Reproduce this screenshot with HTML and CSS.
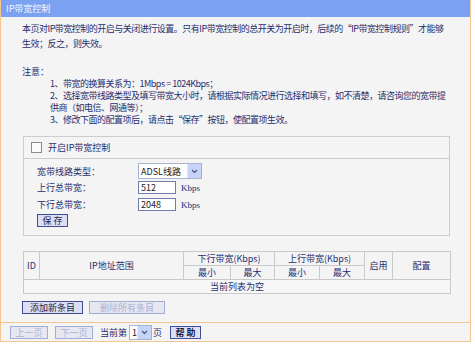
FILE: index.html
```html
<!DOCTYPE html>
<html lang="zh-CN">
<head>
    <meta charset="UTF-8">
    <title>IP带宽控制</title>
    <link rel="stylesheet" href="styles.css">
</head>
<body>
    <div class="frame">
        <div class="title">IP带宽控制</div>
        <div class="main">
            <p class="intro">本页对IP带宽控制的开启与关闭进行设置。只有IP带宽控制的总开关为开启时，后续的“IP带宽控制规则”才能够<br>生效；反之，则失效。</p>
            <p class="note-title">注意：</p>
            <ul class="notes">
                <li>1、带宽的换算关系为：1Mbps = 1024Kbps；</li>
                <li>2、选择宽带线路类型及填写带宽大小时，请根据实际情况进行选择和填写，如不清楚，请咨询您的宽带提<br>供商（如电信、网通等）；</li>
                <li>3、修改下面的配置项后，请点击“保存”按钮，使配置项生效。</li>
            </ul>

            <div class="box">
                <div class="box-head"><span class="check"></span>开启IP带宽控制</div>
                <div class="form">
                    <div class="row">
                        <span class="label">宽带线路类型：</span>
                        <div class="select wide">ADSL线路<span class="arrow"><svg width="7" height="5" viewBox="0 0 7 5"><path d="M1 1l2.5 2.5L6 1" fill="none" stroke="#4d6185" stroke-width="1.4"/></svg></span></div>
                    </div>
                    <div class="row">
                        <span class="label">上行总带宽：</span>
                        <span class="input">512</span>
                        <span class="unit">Kbps</span>
                    </div>
                    <div class="row">
                        <span class="label">下行总带宽：</span>
                        <span class="input">2048</span>
                        <span class="unit">Kbps</span>
                    </div>
                    <button class="btn save">保 存</button>
                </div>
            </div>

            <table class="list">
                <colgroup>
                    <col style="width:16px"><col style="width:144px"><col style="width:47px"><col style="width:44px">
                    <col style="width:45px"><col style="width:45px"><col style="width:28px"><col style="width:58px">
                </colgroup>
                <tr>
                    <th rowspan="2">ID</th>
                    <th rowspan="2">IP地址范围</th>
                    <th colspan="2">下行带宽(Kbps)</th>
                    <th colspan="2">上行带宽(Kbps)</th>
                    <th rowspan="2">启用</th>
                    <th rowspan="2">配置</th>
                </tr>
                <tr>
                    <th>最小</th><th>最大</th><th>最小</th><th>最大</th>
                </tr>
                <tr>
                    <td colspan="8" class="empty">当前列表为空</td>
                </tr>
            </table>

            <div class="actions">
                <button class="btn">添加新条目</button>
                <button class="btn off">删除所有条目</button>
            </div>
        </div>
        <div class="nav">
            <button class="btn off page">上一页</button>
            <button class="btn off page">下一页</button>
            <span class="cur">当前第</span>
            <div class="select small">1<span class="arrow"><svg width="7" height="5" viewBox="0 0 7 5"><path d="M1 1l2.5 2.5L6 1" fill="none" stroke="#4d6185" stroke-width="1.4"/></svg></span></div>
            <span>页</span>
            <button class="btn help">帮 助</button>
        </div>
    </div>
</body>
</html>
```

FILE: styles.css
```css
body {
    margin: 0;
    background: #ffffff;
    font-family: "Noto Sans CJK SC", "DejaVu Sans", sans-serif;
    font-size: 9px;
    color: #1f2e6e;
}
.frame {
    width: 469px;
    border: 1px solid #f6c690;
    border-top: none;
    background: #f4f4f4;
}
.title {
    height: 17px;
    line-height: 17px;
    padding-left: 5px;
    background: #7aa2f1;
    color: #f2f6ff;
}
.main {
    padding: 4px 20px 8px 21px;
}
.intro {
    margin: 0;
    line-height: 15px;
    white-space: nowrap;
    letter-spacing: -0.5px;
}
.note-title {
    margin: 15px 0 0;
    line-height: 12px;
}
.notes {
    list-style: none;
    margin: 0;
    padding: 0 0 0 28px;
    line-height: 12px;
    white-space: nowrap;
    letter-spacing: -0.5px;
}
.box {
    margin: 10px 0 0 1px;
    border: 1px solid #cdcdcd;
}
.box-head {
    display: flex;
    align-items: center;
    height: 21px;
    border-bottom: 1px solid #cdcdcd;
    padding-left: 7px;
}
.check {
    width: 9px;
    height: 9px;
    border: 1px solid #8a8a8a;
    background: #fafafa;
    margin-right: 6px;
}
.form {
    padding: 4px 0 8px 13px;
}
.row {
    display: flex;
    align-items: center;
    height: 17px;
}
.row:first-child {
    height: 16px;
}
.label {
    width: 101px;
}
.select {
    display: flex;
    align-items: center;
    justify-content: space-between;
    box-sizing: border-box;
    border: 1px solid #a5b4cc;
    background: #ffffff;
    color: #222;
    padding-left: 2px;
}
.select.wide {
    width: 64px;
    height: 16px;
}
.select.small {
    width: 23px;
    height: 15px;
    margin-right: 1px;
}
.arrow {
    display: flex;
    align-items: center;
    justify-content: center;
    width: 13px;
    height: 100%;
    background: #c6d5f7;
    border-left: 1px solid #e0e8fb;
}
.input {
    box-sizing: border-box;
    width: 38px;
    height: 13px;
    line-height: 11px;
    border: 1px solid #6f7fa8;
    background: #ffffff;
    color: #222;
    padding-left: 2px;
}
.unit {
    margin-left: 5px;
    font-family: "Liberation Serif", serif;
}
.btn {
    display: block;
    box-sizing: border-box;
    height: 13px;
    padding: 0 5px;
    font-family: inherit;
    font-size: 9px;
    line-height: 11px;
    color: #1a1f4a;
    background: #dcdff3;
    border: 1px solid #3f4d93;
    cursor: pointer;
}
.btn.save {
    margin-top: 1px;
    width: 31px;
    padding: 0;
}
.btn.off {
    color: #a9b3d6;
    background: #e6e7f1;
    border-color: #a3abd2;
}
.list {
    margin: 15px 0 0 1px;
    width: 427px;
    border-collapse: collapse;
    table-layout: fixed;
}
.list th,
.list td {
    border: 1px solid #c9c9c9;
    font-weight: normal;
    padding: 0;
    height: 13px;
    line-height: 13px;
    text-align: center;
}
.list td.empty {
    background: #f7f7f7;
}
.actions {
    display: flex;
    gap: 6px;
    margin-top: 7px;
}
.actions .btn {
    width: 61px;
}
.actions .btn.off {
    width: 76px;
}
.nav {
    display: flex;
    align-items: center;
    height: 18px;
    border-top: 1px solid #f6c690;
    padding-left: 9px;
}
.btn.page {
    width: 38px;
    padding: 0;
    margin-right: 7px;
}
.cur {
    margin-right: 2px;
}
.btn.help {
    width: 31px;
    padding: 0;
    margin-left: 8px;
    font-weight: bold;
}
```
